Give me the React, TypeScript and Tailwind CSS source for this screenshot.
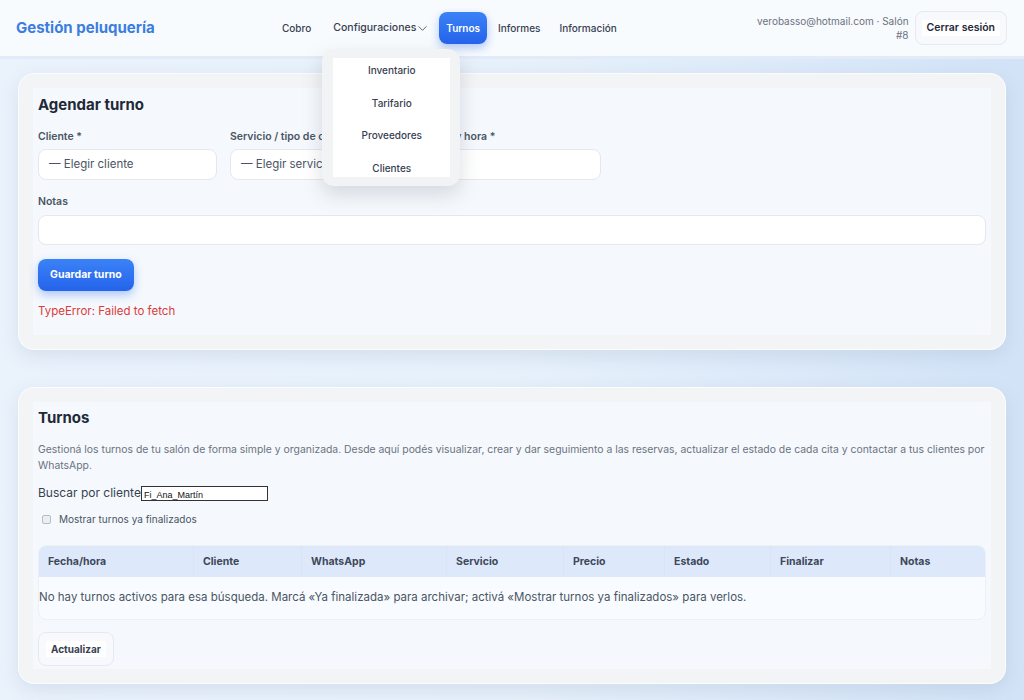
import React from 'react';

const font = { fontFamily: 'Inter, "Noto Sans", sans-serif' };

const columns = ['Fecha/hora', 'Cliente', 'WhatsApp', 'Servicio', 'Precio', 'Estado', 'Finalizar', 'Notas'];

const configItems = ['Inventario', 'Tarifario', 'Proveedores', 'Clientes'];

const NavLink: React.FC<{ label: string; active?: boolean }> = ({ label, active }) => (
  <a
    className={
      active
        ? 'rounded-lg bg-gradient-to-b from-[#3b82f6] to-[#2563eb] px-[7px] py-[9px] text-[10px] leading-[14px] font-semibold text-white shadow-[0_4px_10px_rgba(37,99,235,0.35)]'
        : 'px-2 py-[9px] text-[10px] leading-[14px] font-medium text-[#374151]'
    }
  >
    {label}
  </a>
);

const Frame: React.FC<{ children: React.ReactNode }> = ({ children }) => (
  <section className="rounded-2xl border border-white/70 bg-[#f3f4f6] p-[14px] shadow-[0_6px_18px_rgba(120,140,170,0.18)]">
    <div className="bg-[#f5f9fd] px-[5px]">{children}</div>
  </section>
);

const Field: React.FC<{ label: string; placeholder?: string }> = ({ label, placeholder }) => (
  <div className="flex min-w-0 flex-col">
    <label className="h-4 whitespace-nowrap text-[10.5px] leading-4 font-semibold text-[#4b5563]">{label}</label>
    <div className="mt-[4px] flex h-[31px] items-center overflow-hidden whitespace-nowrap rounded-lg border border-[#e5e7eb] bg-white px-[10px] text-[11.5px] text-[#4b5563]">
      {placeholder}
    </div>
  </div>
);

export default function App() {
  return (
    <div className="min-h-screen bg-gradient-to-r from-[#eaf3fc] via-[#e7f1fb] to-[#d2e3f7] pb-4" style={font}>
      <header className="flex h-[59px] items-center border-b-[3px] border-[#e1ecf8] bg-[#f8fbfe] pl-4 pr-[17px]">
        <h1 className="w-[258px] text-[15px] font-bold text-[#3c7de0]">Gestión peluquería</h1>
        <nav className="flex items-center gap-[3px]">
          <NavLink label="Cobro" />
          <div className="relative ml-[3px]">
            <a className="flex items-center gap-[1px] px-2 py-[9px] text-[10.5px] leading-[14px] font-medium text-[#374151]">
              Configuraciones
              <svg width="11" height="11" viewBox="0 0 24 24" fill="none" stroke="currentColor" strokeWidth="1.8" strokeLinecap="round" strokeLinejoin="round">
                <path d="M4 8l8 8 8-8" />
              </svg>
            </a>
            <div className="absolute left-[-3px] top-[37px] z-10 w-[138px] rounded-xl bg-[#f2f3f5] pb-[9px] pl-[11px] pr-[10px] pt-[9px] shadow-[0_8px_20px_rgba(90,100,120,0.22)]">
              <div className="h-[119px] overflow-hidden bg-white">
                <ul className="-mt-[4px] text-center text-[10px] font-medium text-[#374151]">
                  {configItems.map((item) => (
                    <li key={item} className="flex h-[32.7px] items-center justify-center">
                      {item}
                    </li>
                  ))}
                </ul>
              </div>
            </div>
          </div>
          <NavLink label="Turnos" active />
          <NavLink label="Informes" />
          <NavLink label="Información" />
        </nav>
        <div className="ml-auto flex items-center gap-[6px]">
          <p className="w-[153px] text-right text-[10px] leading-[14px] text-[#6b7280]">
            verobasso@hotmail.com · Salón #8
          </p>
          <button className="rounded-lg border border-[#e5eaf1] bg-[#f7f9fc] px-[6px] py-[8px]">
            <span className="block bg-white px-[5px] text-[10.5px] leading-4 font-semibold text-[#1f2937]">Cerrar sesión</span>
          </button>
        </div>
      </header>

      <main className="flex flex-col gap-[37px] px-[18px] pt-[14px]">
        <Frame>
          <div className="pb-4 pt-[7px]">
            <h2 className="text-[15px] leading-5 font-bold text-[#1f2937]">Agendar turno</h2>
            <div className="mt-[14px] grid w-[563px] grid-cols-3 gap-[13px]">
              <Field label="Cliente *" placeholder="— Elegir cliente" />
              <Field label="Servicio / tipo de cita *" placeholder="— Elegir servicio del tarifario" />
              <Field label="Fecha y hora *" />
            </div>
            <label className="mt-[14px] block h-4 text-[10.5px] leading-4 font-semibold text-[#4b5563]">Notas</label>
            <div className="mt-[5px] h-[30px] rounded-lg border border-[#e5e7eb] bg-white" />
            <button className="mt-[14px] h-8 rounded-lg bg-gradient-to-b from-[#3b82f6] to-[#2563eb] px-3 text-[10.5px] font-bold text-white shadow-[0_4px_10px_rgba(37,99,235,0.35)]">
              Guardar turno
            </button>
            <p className="mt-3 text-[11.5px] leading-4 text-[#dc3b3b]">TypeError: Failed to fetch</p>
          </div>
        </Frame>

        <Frame>
          <div className="pb-[3px] pt-[6px]">
            <h2 className="text-[15px] leading-5 font-bold text-[#1f2937]">Turnos</h2>
            <p className="mt-[14px] text-[10.4px] leading-4 text-[#6b7280]">
              Gestioná los turnos de tu salón de forma simple y organizada. Desde aquí podés visualizar, crear y dar seguimiento a las reservas, actualizar el estado de cada cita y contactar a tus clientes por WhatsApp.
            </p>
            <div className="mt-[11px] flex items-center">
              <span className="text-[12px] leading-4 text-[#374151]">Buscar por cliente</span>
              <input
                readOnly
                value="Fi_Ana_Martín"
                className="h-[15px] w-[127px] border border-[#333] bg-white px-[2px] pt-[3px] text-[9px] leading-[10px] text-[#111]"
                style={{ fontFamily: '"Liberation Sans", sans-serif' }}
              />
            </div>
            <div className="mt-[10px] flex items-center gap-[8px] pl-1">
              <span className="h-[9px] w-[9px] rounded-[2px] border border-[#b8bcc4] bg-[#eceef1]" />
              <span className="text-[10px] leading-4 text-[#4b5563]">Mostrar turnos ya finalizados</span>
            </div>
            <div className="mt-[18px] overflow-hidden rounded-lg border border-[#edf1f6] bg-[#f8fbff]">
              <div className="grid h-[31px] grid-cols-[154px_108px_145px_117px_101px_106px_120px_96px] bg-[#dde9fb] text-[10.5px] font-bold text-[#3e4858]">
                {columns.map((c, i) => (
                  <div key={c} className={`flex items-center px-[9px] ${i > 0 ? 'border-l border-[#d8e5f8]' : ''}`}>
                    {c}
                  </div>
                ))}
              </div>
              <div className="flex h-[42px] items-center text-[11.5px] text-[#4b5563]">
                No hay turnos activos para esa búsqueda. Marcá «Ya finalizada» para archivar; activá «Mostrar turnos ya finalizados» para verlos.
              </div>
            </div>
            <button className="mt-[12px] rounded-lg border border-[#e5eaf1] bg-[#f7f9fc] px-[7px] py-[8px]">
              <span className="block bg-white px-[5px] text-[10px] leading-4 font-bold text-[#374151]">Actualizar</span>
            </button>
          </div>
        </Frame>
      </main>
    </div>
  );
}
